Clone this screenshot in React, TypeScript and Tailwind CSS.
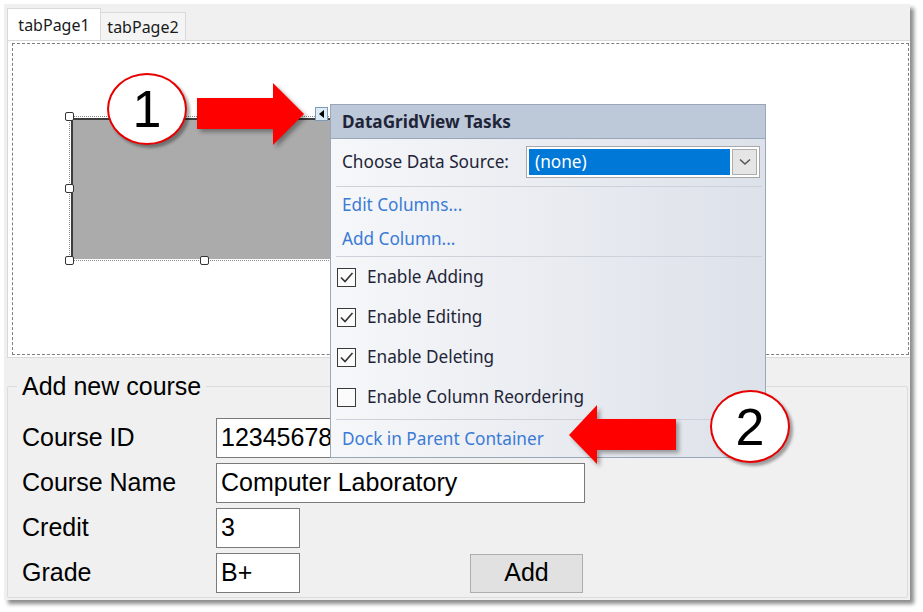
import React from "react";

const seg = "font-['Noto_Sans',sans-serif]";
const ms = "font-['Liberation_Sans',Arial,sans-serif]";

function Handle({ x, y }: { x: number; y: number }) {
  return (
    <div
      className="absolute w-[9px] h-[9px] bg-white border border-[#333] rounded-[2px]"
      style={{ left: x - 4, top: y - 4 }}
    />
  );
}

function Check({ checked, label }: { checked: boolean; label: string }) {
  return (
    <div className="h-[40px] pl-[6px] flex items-center">
      <div className="w-[19px] h-[19px] border border-[#3a3a3a] bg-[#fbfbfb] flex items-center justify-center">
        {checked && (
          <svg width="15" height="15" viewBox="0 0 15 15">
            <path d="M2 7.5 L6 11.5 L13.5 3" fill="none" stroke="#333" strokeWidth="1.6" />
          </svg>
        )}
      </div>
      <span className="ml-[11px]">{label}</span>
    </div>
  );
}

function Sep() {
  return <div className="h-px ml-[5px] mr-[3px] bg-[#cdd1da]" />;
}

export default function App() {
  return (
    <div className="relative w-[923px] h-[612px] bg-white overflow-hidden">
      <div className="pt-[4px] pl-[4px]">
        <div className="w-[906px] h-[596px] bg-[#f0f0f0] shadow-[4px_4px_4px_rgba(0,0,0,0.45)] flex flex-col">
          {/* tab strip */}
          <div className={`flex items-end h-[36px] pl-[3px] ${seg} text-[16px] text-[#1a1a1a]`}>
            <div className="w-[94px] h-[32px] bg-white border border-b-0 border-[#d9d9d9] flex items-center justify-center">
              tabPage1
            </div>
            <div className="w-[85px] h-[28px] bg-[#f4f4f4] border border-l-0 border-b-0 border-[#d9d9d9] flex items-center justify-center">
              tabPage2
            </div>
          </div>
          {/* tab page */}
          <div className="relative ml-[3px] w-[903px] h-[318px] bg-white border border-r-0 border-[#d9d9d9] pt-[2px] pl-[4px]">
            <div className="h-[312px] w-[897px] border border-dashed border-[#7f7f7f]" />
            {/* designer canvas: datagridview */}
            <div className="absolute left-[61px] top-[75px] w-[270px] h-[145px] border border-dotted border-[#8a8a8a] p-[1px]">
              <div className="w-full h-full bg-[#ababab] border-t-2 border-l-2 border-[#3c3c3c]" />
            </div>
            <Handle x={61} y={75} />
            <Handle x={61} y={147} />
            <Handle x={61} y={219} />
            <Handle x={196} y={219} />
            <Handle x={196} y={75} />
            <div className="absolute left-[307px] top-[66px] w-[13px] h-[14px] bg-[#dcecf7] border border-[#7d9ab8] flex items-center justify-center">
              <svg width="7" height="8" viewBox="0 0 7 8">
                <path d="M6 0 L1 4 L6 8 Z" fill="#000" />
              </svg>
            </div>
          </div>
          {/* group box */}
          <fieldset className={`mt-[13px] ml-[3px] w-[901px] h-[227px] border border-[#dcdcdc] rounded-[2px] pl-[9px] ${ms} text-[25px] text-black`}>
            <legend className="px-[5px] leading-[30px]">Add new course</legend>
            <div className="pt-[17px] pl-[5px] flex flex-col gap-[5px]">
              <div className="h-[40px] flex items-center">
                <div className="w-[194px]">Course ID</div>
                <div className="w-[369px] h-full bg-white border border-[#7a7a7a] pl-[4px] flex items-center">123456789</div>
              </div>
              <div className="h-[40px] flex items-center">
                <div className="w-[194px]">Course Name</div>
                <div className="w-[369px] h-full bg-white border border-[#7a7a7a] pl-[4px] flex items-center">Computer Laboratory</div>
              </div>
              <div className="h-[40px] flex items-center">
                <div className="w-[194px]">Credit</div>
                <div className="w-[84px] h-full bg-white border border-[#7a7a7a] pl-[4px] flex items-center">3</div>
              </div>
              <div className="h-[40px] flex items-center">
                <div className="w-[194px]">Grade</div>
                <div className="w-[84px] h-full bg-white border border-[#7a7a7a] pl-[4px] flex items-center">B+</div>
                <div className="ml-[170px] w-[113px] h-[39px] bg-[#e1e1e1] border border-[#adadad] flex items-center justify-center">Add</div>
              </div>
            </div>
          </fieldset>
        </div>
      </div>

      {/* smart tag panel */}
      <div className={`absolute left-[330px] top-[104px] w-[436px] border border-[#9aa6ba] bg-linear-to-r from-[#f6f7f9] to-[#dde1e9] ${seg} text-[17.2px] text-[#1e2538]`}>
        <div className="h-[34px] bg-[#bdc8d9] border-b border-[#9aa6ba] pl-[11px] flex items-center font-bold">
          DataGridView Tasks
        </div>
        <div className="mt-[7px] h-[32px] pl-[11px] flex items-center">
          <div className="w-[184px]">Choose Data Source:</div>
          <div className="w-[234px] h-[32px] border border-[#a7a7a7] bg-white p-[2px] flex">
            <div className="w-[201px] h-full bg-[#0078d7] text-white pl-[6px] flex items-center">(none)</div>
            <div className="ml-[2px] w-[25px] h-full bg-[#e5e5e5] border border-[#adadad] flex items-center justify-center">
              <svg width="12" height="8" viewBox="0 0 12 8">
                <path d="M1 1.5 L6 6 L11 1.5" fill="none" stroke="#555" strokeWidth="1.6" />
              </svg>
            </div>
          </div>
        </div>
        <div className="mt-[8px]">
          <Sep />
        </div>
        <div className="h-[35px] pl-[11px] flex items-center text-[#3a7bd5]">Edit Columns...</div>
        <div className="h-[34px] pl-[11px] flex items-center text-[#3a7bd5]">Add Column...</div>
        <Sep />
        <Check checked label="Enable Adding" />
        <Check checked label="Enable Editing" />
        <Check checked label="Enable Deleting" />
        <Check checked={false} label="Enable Column Reordering" />
        <div className="mt-[2px]">
          <Sep />
        </div>
        <div className="h-[37px] pl-[11px] flex items-center text-[#3a7bd5]">Dock in Parent Container</div>
      </div>

      {/* arrows */}
      <svg
        className="absolute left-0 top-0 pointer-events-none"
        width="923"
        height="612"
        viewBox="0 0 923 612"
        style={{ filter: "drop-shadow(3px 3px 2px rgba(0,0,0,0.35))" }}
      >
        <polygon points="197,98 273,98 273,83 304,114 273,145 273,129 197,129" fill="#ff0000" />
        <polygon points="676,419 597,419 597,405 569,435 597,464 597,450 676,450" fill="#ff0000" />
      </svg>

      {/* callouts */}
      <div className={`absolute left-[107px] top-[73px] w-[80px] h-[72px] rounded-[50%] bg-white border-2 border-[#e60000] shadow-[3px_3px_3px_rgba(0,0,0,0.35)] flex items-center justify-center ${ms} text-[52px] leading-none text-black`}>
        1
      </div>
      <div className={`absolute left-[710px] top-[390px] w-[80px] h-[73px] rounded-[50%] bg-white border-2 border-[#e60000] shadow-[3px_3px_3px_rgba(0,0,0,0.35)] flex items-center justify-center ${ms} text-[52px] leading-none text-black`}>
        2
      </div>
    </div>
  );
}
